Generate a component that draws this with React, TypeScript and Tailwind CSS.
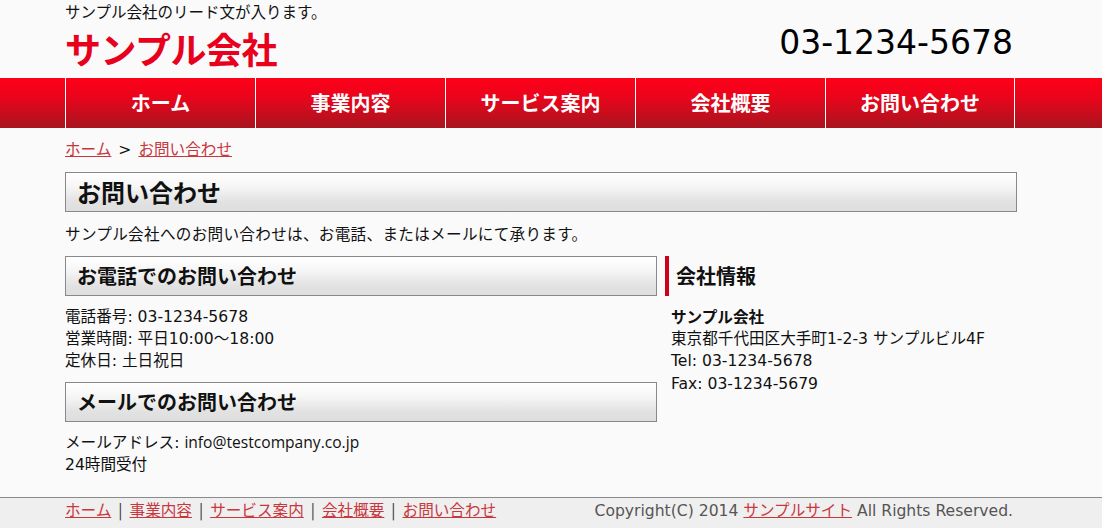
import React from "react";

const font = { fontFamily: '"DejaVu Sans", "Noto Sans CJK JP", sans-serif' };
const jp = { fontFamily: '"Noto Sans CJK JP", "DejaVu Sans", sans-serif' };

const navItems = ["ホーム", "事業内容", "サービス案内", "会社概要", "お問い合わせ"];

function H2({ children }: { children: React.ReactNode }) {
  return (
    <div
      className="h-[40px] border border-[#888] bg-[linear-gradient(to_bottom,#ffffff_0%,#f6f6f6_35%,#e2e2e2_75%,#dedede_100%)] pl-[11px] flex items-center text-[20px] font-bold text-[#111] leading-none"
      style={jp}
    >
      {children}
    </div>
  );
}

export default function App() {
  return (
    <div className="min-h-[528px] bg-[#fafafa] text-[#111] flex flex-col" style={font}>
      <header className="w-[952px] ml-[65px] h-[78px]">
        <div className="flex justify-between">
          <div>
            <p className="text-[15.5px] leading-[22px]" style={jp}>サンプル会社のリード文が入ります。</p>
            <h1 className="text-[36px] font-bold text-[#e8001c] leading-[52px] tracking-[-0.5px]" style={jp}>サンプル会社</h1>
          </div>
          <div className="text-[33px] leading-none pt-[26px] pr-[4px] text-black" style={font}>03-1234-5678</div>
        </div>
      </header>
      <nav className="h-[50px] bg-[linear-gradient(to_bottom,#ff0019_0%,#e8051c_40%,#a8141f_100%)]">
        <ul className="w-[952px] ml-[65px] flex h-full">
          {navItems.map((n, i) => (
            <li
              key={n}
              className={`w-[190px] h-full border-l border-white flex items-center justify-center text-white text-[20px] font-bold ${i === navItems.length - 1 ? "border-r" : ""}`}
              style={jp}
            >
              {n}
            </li>
          ))}
        </ul>
      </nav>
      <main className="w-[952px] ml-[65px] flex-1 pb-[21px]">
        <div className="mt-[9px] text-[15.6px] leading-[22px]" style={jp}>
          <a className="text-[#c8373d] underline">ホーム</a>
          <span className="mx-[7px]" style={font}>&gt;</span>
          <a className="text-[#c8373d] underline">お問い合わせ</a>
        </div>
        <div
          className="mt-[11px] h-[40px] border border-[#888] bg-[linear-gradient(to_bottom,#ffffff_0%,#f6f6f6_35%,#e2e2e2_75%,#dedede_100%)] pl-[11px] flex items-center text-[24px] font-bold leading-none"
          style={jp}
        >
          お問い合わせ
        </div>
        <p className="mt-[10px] text-[15.6px] leading-[22px] tracking-[0.3px]" style={jp}>
          サンプル会社へのお問い合わせは、お電話、またはメールにて承ります。
        </p>
        <div className="mt-[12px] flex gap-[8px]">
          <div className="w-[592px]">
            <H2>お電話でのお問い合わせ</H2>
            <div className="mt-[10px] text-[15.6px] leading-[22px]">
              <p>電話番号: 03-1234-5678</p>
              <p>営業時間: 平日10:00〜18:00</p>
              <p>定休日: 土日祝日</p>
            </div>
            <div className="mt-[10px]">
              <H2>メールでのお問い合わせ</H2>
            </div>
            <div className="mt-[9px] text-[15.6px] leading-[22px]">
              <p>
                メールアドレス: <span style={{ fontFamily: '"Open Sans", "DejaVu Sans", sans-serif' }}>info@testcompany.co.jp</span>
              </p>
              <p>24時間受付</p>
            </div>
          </div>
          <div className="flex-1">
            <div className="h-[40px] border-l-[4px] border-[#d0001a] pl-[7px] flex items-center text-[20px] font-bold leading-none" style={jp}>
              会社情報
            </div>
            <div className="mt-[9px] text-[15.6px] leading-[22.5px] pl-[6px]">
              <p className="font-bold" style={jp}>サンプル会社</p>
              <p>東京都千代田区大手町1-2-3 サンプルビル4F</p>
              <p>Tel: 03-1234-5678</p>
              <p>Fax: 03-1234-5679</p>
            </div>
          </div>
        </div>
      </main>
      <footer className="border-t border-[#8a8a8a] bg-[#efefef] h-[31px]">
        <div className="w-[952px] ml-[65px] flex justify-between text-[15.6px] leading-[22px] text-[#555]">
          <div style={jp}>
            {navItems.map((n, i) => (
              <React.Fragment key={n}>
                {i > 0 && <span className="mx-[7px] text-[#333]">|</span>}
                <a className="text-[#c8373d] underline">{n}</a>
              </React.Fragment>
            ))}
          </div>
          <div className="pr-[4px]">
            Copyright(C) 2014 <a className="text-[#c8373d] underline" style={jp}>サンプルサイト</a> All Rights Reserved.
          </div>
        </div>
      </footer>
    </div>
  );
}
